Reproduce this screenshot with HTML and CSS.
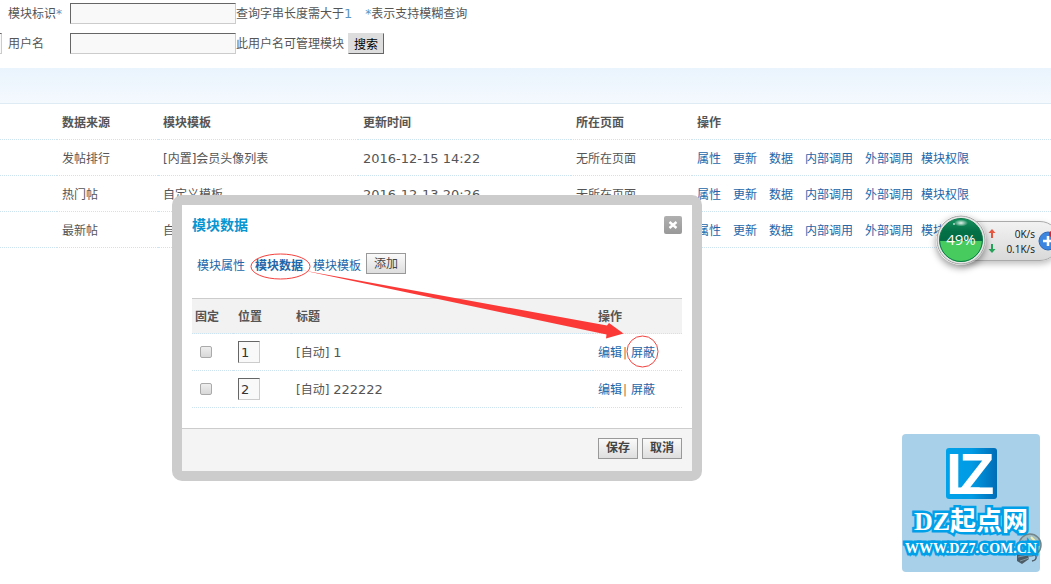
FILE: index.html
```html
<!DOCTYPE html>
<html lang="zh-CN">
<head>
    <meta charset="UTF-8" />
    <meta name="viewport" content="width=device-width, initial-scale=1.0" />
    <title>模块管理</title>
    <link rel="stylesheet" href="styles.css">
</head>
<body>
    <form class="search">
      <div class="search-row">
        <span class="prev"></span>
        <label for="blockname">模块标识<span class="star">*</span></label>
        <input type="text" id="blockname" class="txt" />
        <span>查询字串长度需大于<span class="num hint">1</span></span>
        <span class="note"><span class="star">*</span>表示支持模糊查询</span>
      </div>
      <div class="search-row">
        <span class="prev"><input type="text" class="txt" aria-label="模块" /></span>
        <label for="username">用户名</label>
        <input type="text" id="username" class="txt" />
        <span>此用户名可管理模块</span>
        <button type="button" class="search-btn">搜索</button>
      </div>
    </form>

    <div class="band"></div>

    <table class="list">
      <colgroup>
        <col class="c-pick" /><col class="c-source" /><col class="c-style" />
        <col class="c-time" /><col class="c-page" /><col />
      </colgroup>
      <thead>
        <tr>
          <th></th>
          <th>数据来源</th>
          <th>模块模板</th>
          <th>更新时间</th>
          <th>所在页面</th>
          <th>操作</th>
        </tr>
      </thead>
      <tbody>
        <tr>
          <td></td>
          <td>发帖排行</td>
          <td>[内置]会员头像列表</td>
          <td class="num">2016-12-15 14:22</td>
          <td>无所在页面</td>
          <td class="ops"><a href="#">属性</a><a href="#">更新</a><a href="#">数据</a><a href="#">内部调用</a><a href="#" class="outer">外部调用</a><a href="#">模块权限</a></td>
        </tr>
        <tr>
          <td></td>
          <td>热门帖</td>
          <td>自定义模板</td>
          <td class="num">2016-12-13 20:26</td>
          <td>无所在页面</td>
          <td class="ops"><a href="#">属性</a><a href="#">更新</a><a href="#">数据</a><a href="#">内部调用</a><a href="#" class="outer">外部调用</a><a href="#">模块权限</a></td>
        </tr>
        <tr>
          <td></td>
          <td>最新帖</td>
          <td>自定义模板</td>
          <td></td>
          <td></td>
          <td class="ops"><a href="#">属性</a><a href="#">更新</a><a href="#">数据</a><a href="#">内部调用</a><a href="#" class="outer">外部调用</a><a href="#">模块权限</a></td>
        </tr>
      </tbody>
    </table>

    <div class="dialog" role="dialog" aria-labelledby="dialogTitle">
      <div class="dialog-head">
        <h3 id="dialogTitle">模块数据</h3>
        <button type="button" class="close" aria-label="关闭">
          <svg width="18" height="18" viewBox="0 0 18 18"><path d="M5.500 6l7 6M12.500 6l-7 6" stroke="#fff" stroke-width="2.400" /></svg>
        </button>
      </div>
      <div class="tabs">
        <a href="#">模块属性</a>
        <a href="#" class="current">模块数据</a>
        <a href="#">模块模板</a>
        <button type="button" class="btn">添加</button>
      </div>
      <table class="items">
        <colgroup>
          <col class="c-lock" /><col class="c-order" /><col /><col class="c-action" />
        </colgroup>
        <thead>
          <tr><th>固定</th><th>位置</th><th>标题</th><th>操作</th></tr>
        </thead>
        <tbody>
          <tr>
            <td><input type="checkbox" class="check" aria-label="固定 1" /></td>
            <td><input type="text" class="txt order" value="1" aria-label="位置 1" /></td>
            <td>[自动] <span class="num">1</span></td>
            <td><a href="#">编辑</a><span class="sep">|</span><a href="#">屏蔽</a></td>
          </tr>
          <tr>
            <td><input type="checkbox" class="check" aria-label="固定 2" /></td>
            <td><input type="text" class="txt order" value="2" aria-label="位置 2" /></td>
            <td>[自动] <span class="num">222222</span></td>
            <td><a href="#">编辑</a><span class="sep">|</span><a href="#">屏蔽</a></td>
          </tr>
        </tbody>
      </table>
      <div class="dialog-foot">
        <button type="button" class="btn strong">保存</button>
        <button type="button" class="btn strong">取消</button>
      </div>
      <!-- red marks: tab, arrow, action -->
      <svg class="marks" width="510" height="266" viewBox="182 205 510 266">
        <ellipse cx="280.5" cy="266.5" rx="29.5" ry="12.5" />
        <circle cx="642.5" cy="351.5" r="15.5" />
        <path class="arrow" d="M301 270L607 325.500L609 323L623.500 333.500L606 338.500L606.500 334.500Z" />
      </svg>
    </div>

    <!-- network speed widget -->
    <div class="speed">
      <div class="speed-bar">
        <div class="speed-line">
          <svg width="8" height="9" viewBox="0 0 8 9"><path d="M4 0L7.500 4H5V9H3V4H.5Z" fill="#e8573f" /></svg>
          <span>0K/s</span>
        </div>
        <div class="speed-line">
          <svg width="8" height="9" viewBox="0 0 8 9"><path d="M4 9L7.500 5H5V0H3V5H.5Z" fill="#27a35a" /></svg>
          <span>0.1K/s</span>
        </div>
      </div>
      <svg class="plus" width="20" height="20" viewBox="0 0 20 20">
        <circle cx="10" cy="10" r="9" fill="#3d86e0" stroke="#2c68b8" />
        <path d="M10 5v10M5 10h10" stroke="#fff" stroke-width="2.500" />
        <circle cx="14" cy="3" r="3" fill="#d22" />
      </svg>
      <svg class="ball" width="50" height="50" viewBox="0 0 50 50">
        <defs>
          <linearGradient id="deep" x1="0" y1="0" x2="0" y2="1">
            <stop offset="0" stop-color="#16925f" />
            <stop offset=".3" stop-color="#047046" />
            <stop offset=".5" stop-color="#046b43" />
          </linearGradient>
          <radialGradient id="shine">
            <stop offset="0" stop-color="#fff" stop-opacity=".9" />
            <stop offset="1" stop-color="#fff" stop-opacity="0" />
          </radialGradient>
        </defs>
        <circle cx="25" cy="25" r="24" fill="#e6e6e6" stroke="#a4a4a4" />
        <circle cx="25" cy="25" r="21.500" fill="url(#deep)" />
        <path d="M4 26H46A21 21 0 0 1 4 26Z" fill="#48cb5e" />
        <circle cx="25" cy="25" r="21.500" fill="none" stroke="#0c7b4a" />
        <ellipse cx="25" cy="8" rx="7" ry="3.500" fill="url(#shine)" />
        <circle cx="18" cy="9" r="1" fill="#fff" opacity=".7" />
      </svg>
      <span class="percent">49%</span>
    </div>

    <div class="brand">
      <svg class="logo" width="51" height="51" viewBox="0 0 51 51">
        <defs>
          <linearGradient id="blue" x1="0" y1="0" x2="1" y2="0">
            <stop offset="0" stop-color="#00a2ea" />
            <stop offset=".5" stop-color="#009be4" />
            <stop offset="1" stop-color="#006cb6" />
          </linearGradient>
        </defs>
        <rect width="51" height="51" rx="3" fill="url(#blue)" />
        <text x="0" y="46">L</text>
        <text x="13" y="46">Z</text>
      </svg>
      <svg class="bulb" width="28" height="32" viewBox="0 0 28 32">
        <circle cx="15" cy="12" r="11" fill="#a3bfc4" stroke="#73858c" stroke-width="1.500" />
        <path d="M16 4l4 4-3 3 5 3" fill="none" stroke="#f2efb0" stroke-width="2" />
        <path d="M2 21l10-3 2 8-7 5-5-3Z" fill="#4d5c66" />
        <path d="M3 24l10-2M5 28l9-3" stroke="#8298a2" />
        <path d="M17 22c5-2 6 5 0 6" fill="none" stroke="#4d5c66" stroke-width="1.500" />
      </svg>
      <div class="brand-name">DZ起点网</div>
      <div class="brand-url">WWW.DZ7.COM.CN</div>
    </div>
</body>
</html>
```
FILE: styles.css
```css
* {
  box-sizing: border-box;
}
body {
  margin: 0;
  min-height: 100vh;
  position: relative;
  overflow: hidden;
  background: #fff;
  color: #555;
  font-family: "DejaVu Sans", "Noto Sans CJK SC", sans-serif;
  font-size: 12px;
  line-height: 18px;
}
a {
  color: #2366a8;
  text-decoration: none;
}
input,
button {
  margin: 0;
  font-family: inherit;
  font-size: 12px;
}
.num {
  font-size: 13px;
}
.star,
.hint {
  color: #5b96c4;
}
.txt {
  width: 166px;
  height: 21px;
  padding: 2px;
  border: 1px solid;
  border-color: #666 #ccc #ccc #666;
  background: #f9f9f9;
  color: #333;
}

/* search form */
.search {
  padding: 3px 0 14px;
  display: grid;
  gap: 9px;
}
.search-row {
  display: flex;
  align-items: center;
  height: 21px;
  white-space: nowrap;
}
.prev {
  display: flex;
  justify-content: flex-end;
  width: 2px;
  margin-right: 6px;
  overflow: hidden;
}
.prev .txt {
  flex: none;
}
.search-row label {
  width: 62px;
}
.note {
  margin-left: 13px;
}
.search-btn {
  height: 21px;
  margin-left: 4px;
  padding: 0 5px;
  border: 1px solid;
  border-color: #ddd #666 #666 #ddd;
  background: #ddd;
  color: #000;
  cursor: pointer;
}

.band {
  height: 35px;
  background: linear-gradient(#eaf4fd, #f4f9fe);
}

/* module list */
table {
  width: 100%;
  table-layout: fixed;
  border-collapse: separate;
  border-spacing: 0;
}
th,
td {
  height: 36px;
  padding: 2px 5px 0;
  text-align: left;
  white-space: nowrap;
}
.list th,
.list td {
  border-bottom: 1px dotted #cde3f2;
}
.list thead th {
  border-top: 1px solid #deebf5;
  height: 37px;
}
.c-pick {
  width: 57px;
}
.c-source {
  width: 101px;
}
.c-style {
  width: 200px;
}
.c-time {
  width: 213px;
}
.c-page {
  width: 121px;
}
.ops a {
  margin-right: 12px;
}
.ops .outer {
  margin-right: 8px;
}

/* dialog */
.dialog {
  position: absolute;
  left: 172px;
  top: 195px;
  width: 530px;
  border: 10px solid #ccc;
  border-radius: 10px;
  background: #fff;
}
.dialog-head {
  display: flex;
  justify-content: space-between;
  align-items: center;
  height: 40px;
  padding: 0 10px;
}
.dialog-head h3 {
  margin: 0;
  color: #0995d0;
  font-size: 14px;
}
.close {
  display: flex;
  width: 18px;
  height: 18px;
  padding: 0;
  border: 0;
  border-radius: 2px;
  background: linear-gradient(#b0b0b0, #999);
}
.tabs {
  display: flex;
  align-items: center;
  height: 37px;
  margin-bottom: 16px;
  padding-left: 15px;
}
.tabs a {
  margin-right: 10px;
  padding-top: 5px;
}
.tabs a.current {
  font-weight: bold;
}
.tabs a:nth-child(3) {
  margin-right: 5px;
}
.btn {
  height: 21px;
  padding: 0 7px;
  border: 1px solid #999;
  background: linear-gradient(#fafafa, #dedede);
  color: #444;
  line-height: 18px;
  cursor: pointer;
}
.strong {
  font-weight: bold;
}
.items {
  width: auto;
  min-width: calc(100% - 20px);
  margin: 0 10px;
}
.items th,
.items td {
  height: 37px;
  border-bottom: 1px dotted #cde3f2;
}
.items thead th {
  height: 36px;
  border-top: 1px solid #ccc;
  background: #f2f2f2;
}
.items th:first-child {
  padding: 2px 3px 0;
}
.items td:first-child {
  padding: 0 8px;
}
.items td:nth-child(2) {
  padding-top: 0;
}
.c-lock {
  width: 41px;
}
.c-order {
  width: 58px;
}
.c-action {
  width: 89px;
}
.check {
  display: block;
  width: 12px;
  height: 12px;
  appearance: none;
  border: 1px solid #aaa;
  border-radius: 2px;
  background: linear-gradient(#eee, #d8d8d8);
}
.check:checked {
  background: #2366a8;
}
.order {
  display: block;
  width: 22px;
  height: 22px;
  font-size: 13px;
}
.sep {
  display: inline-block;
  width: 9px;
  padding-left: 1px;
  color: #b87048;
}
.dialog-foot {
  display: flex;
  justify-content: flex-end;
  align-items: center;
  gap: 4px;
  height: 43px;
  margin-top: 20px;
  padding: 0 10px 4px;
  border-top: 1px solid #ccc;
  background: #f4f4f4;
}
.marks {
  position: absolute;
  left: 0;
  top: 0;
  pointer-events: none;
  fill: none;
  stroke: #f4403c;
}
.arrow {
  fill: #fb3a38;
  stroke: none;
}

/* speed widget */
.speed {
  position: absolute;
  right: -1px;
  top: 215px;
  width: 116px;
  height: 50px;
}
.speed-bar {
  position: absolute;
  left: 25px;
  right: -8px;
  top: 6px;
  height: 40px;
  padding: 4px 24px 0 26px;
  border: 1px solid #aaa;
  border-radius: 0 20px 20px 0;
  background: linear-gradient(#f2f2f2, #d9d9d9);
  box-shadow: 0 3px 6px rgba(0, 0, 0, 0.25);
}
.speed-line {
  display: flex;
  justify-content: space-between;
  align-items: center;
  height: 15px;
  color: #111;
  font-family: "Open Sans", sans-serif;
  font-size: 10px;
}
.plus {
  position: absolute;
  right: -6px;
  top: 16px;
}
.ball {
  position: absolute;
  left: 0;
  top: 0;
  border-radius: 50%;
  box-shadow: 0 3px 7px rgba(0, 0, 0, 0.4);
}
.percent {
  position: absolute;
  left: 0;
  top: 15px;
  width: 50px;
  color: #fff;
  font-family: "Open Sans", sans-serif;
  font-size: 15px;
  text-align: center;
}

/* brand mark */
.brand {
  position: absolute;
  right: 11px;
  bottom: 12px;
  width: 138px;
  height: 138px;
  padding-top: 14px;
  border-radius: 4px;
  background: #a8d0e9;
  text-align: center;
  white-space: nowrap;
}
.logo {
  display: block;
  margin: 0 auto;
  overflow: visible;
}
.logo text {
  fill: #fff;
  font-family: "Liberation Sans", sans-serif;
  font-size: 58px;
  font-weight: bold;
}
.bulb {
  position: absolute;
  right: -3px;
  top: 99px;
}
.brand-name,
.brand-url {
  position: relative;
  color: #fff;
  font-family: "Liberation Serif", "Noto Sans CJK SC", serif;
  font-weight: bold;
  -webkit-text-stroke: 5px #00a0e9;
  paint-order: stroke fill;
}
.brand-name {
  margin-top: 7px;
  font-size: 26px;
  line-height: 32px;
}
.brand-url {
  display: flex;
  justify-content: center;
  font-size: 14px;
  line-height: 22px;
}
```
